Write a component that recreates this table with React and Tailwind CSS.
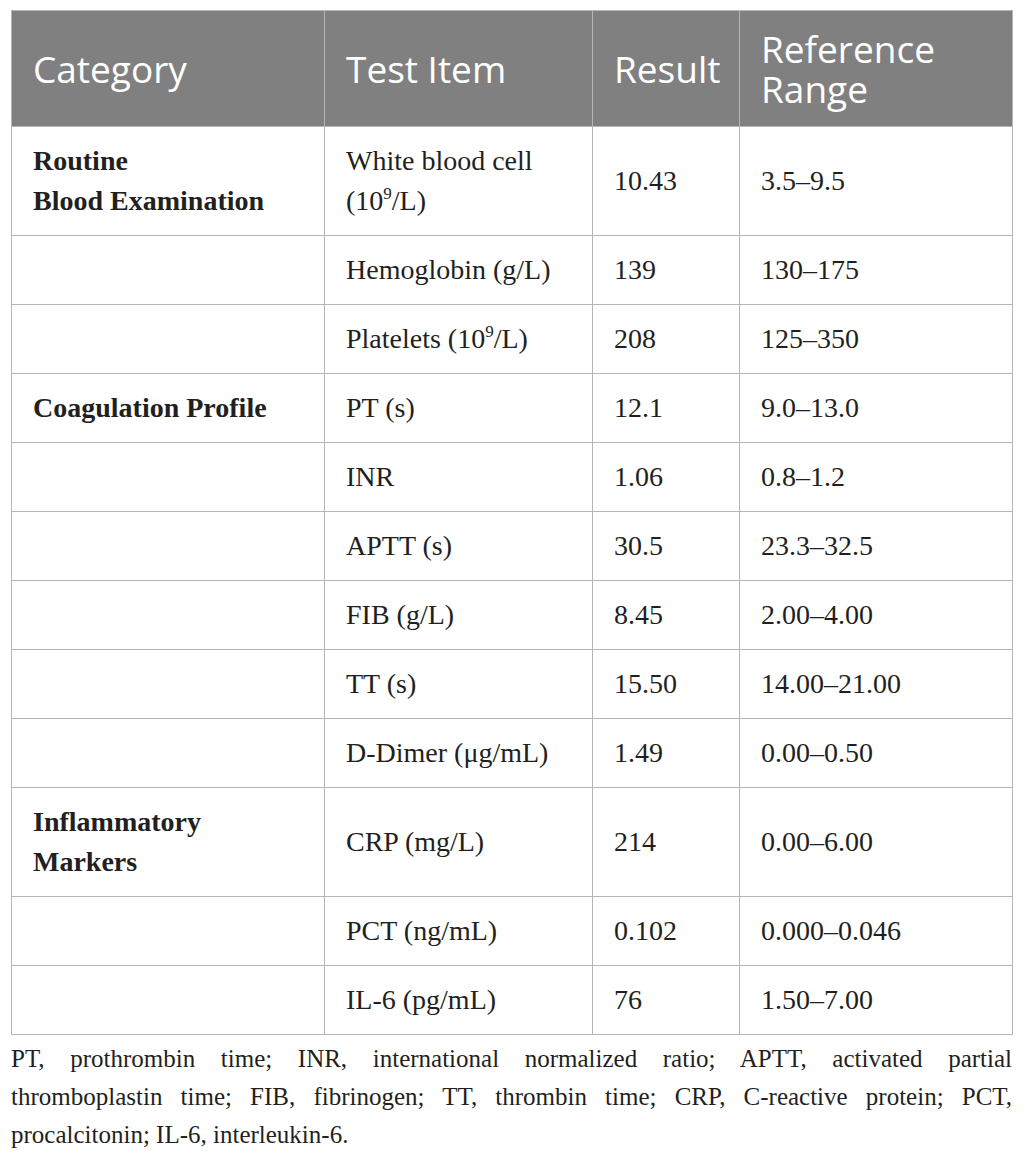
const sup = "text-[17px] relative -top-[11px]";

const rows = [
  { cat: ["Routine", "Blood Examination"], item: <>White blood cell<br />(10<sup className={sup}>9</sup>/L)</>, result: "10.43", range: "3.5–9.5", tall: true },
  { item: "Hemoglobin (g/L)", result: "139", range: "130–175" },
  { item: <>Platelets (10<sup className={sup}>9</sup>/L)</>, result: "208", range: "125–350" },
  { cat: ["Coagulation Profile"], item: "PT (s)", result: "12.1", range: "9.0–13.0" },
  { item: "INR", result: "1.06", range: "0.8–1.2" },
  { item: "APTT (s)", result: "30.5", range: "23.3–32.5" },
  { item: "FIB (g/L)", result: "8.45", range: "2.00–4.00" },
  { item: "TT (s)", result: "15.50", range: "14.00–21.00" },
  { item: "D-Dimer (μg/mL)", result: "1.49", range: "0.00–0.50" },
  { cat: ["Inflammatory", "Markers"], item: "CRP (mg/L)", result: "214", range: "0.00–6.00", tall: true },
  { item: "PCT (ng/mL)", result: "0.102", range: "0.000–0.046" },
  { item: "IL-6 (pg/mL)", result: "76", range: "1.50–7.00" },
];

const cell = "border border-[#b5b5b5] px-[21px] align-middle";

export default function App() {
  return (
    <div className="w-[1026px] h-[1159px] bg-white pt-[10px] pl-[11px] pr-[14px]">
      <table className="table-fixed border-collapse w-[1001px] text-[#231f20]" style={{ fontFamily: '"Liberation Serif", serif' }}>
        <colgroup>
          <col className="w-[313px]" />
          <col className="w-[268px]" />
          <col className="w-[147px]" />
          <col className="w-[273px]" />
        </colgroup>
        <thead>
          <tr className="h-[116px] bg-[#808080] text-white text-left text-[37px] leading-[40px]" style={{ fontFamily: '"Open Sans", sans-serif' }}>
            <th className={`${cell} font-normal`}>Category</th>
            <th className={`${cell} font-normal`}>Test Item</th>
            <th className={`${cell} font-normal`}>Result</th>
            <th className={`${cell} font-normal`}>Reference<br />Range</th>
          </tr>
        </thead>
        <tbody className="text-[28px] leading-[40px]">
          {rows.map((r, i) => (
            <tr key={i} className={r.tall ? "h-[109px]" : "h-[69px]"}>
              <td className={`${cell} font-bold`}>
                {r.cat && r.cat.map((c, j) => <div key={j}>{c}</div>)}
              </td>
              <td className={cell}>{r.item}</td>
              <td className={cell}>{r.result}</td>
              <td className={cell}>{r.range}</td>
            </tr>
          ))}
        </tbody>
      </table>
      <div className="w-[1001px] mt-[5px] text-[25px] leading-[38px] text-[#231f20]" style={{ fontFamily: '"Liberation Serif", serif' }}>
        <div className="text-justify [text-align-last:justify]">PT, prothrombin time; INR, international normalized ratio; APTT, activated partial</div>
        <div className="text-justify [text-align-last:justify]">thromboplastin time; FIB, fibrinogen; TT, thrombin time; CRP, C-reactive protein; PCT,</div>
        <div>procalcitonin; IL-6, interleukin-6.</div>
      </div>
    </div>
  );
}
